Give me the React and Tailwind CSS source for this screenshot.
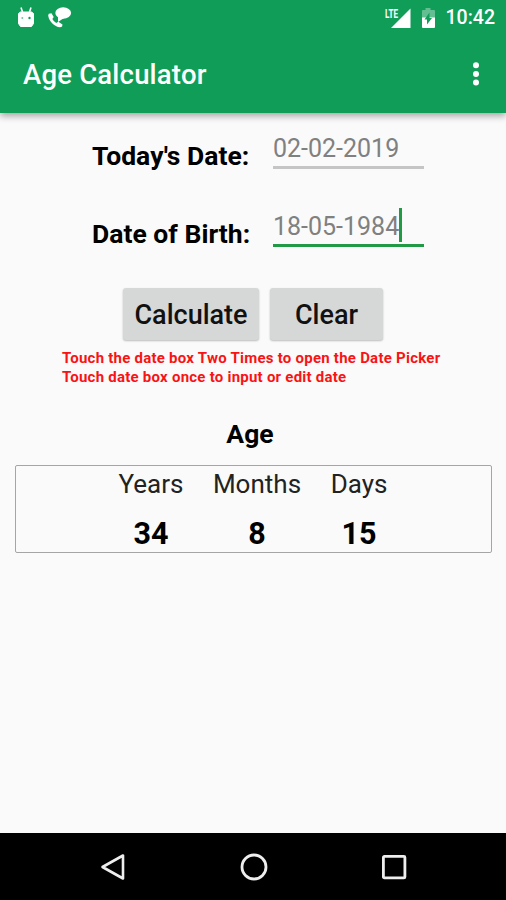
import { useState } from 'react'

const results = [
  { label: 'Years', value: '34', width: 'w-[66px]' },
  { label: 'Months', value: '8', width: 'w-[90px]' },
  { label: 'Days', value: '15', width: 'w-[58px]' },
]

function StatusBar() {
  return (
    <div className="flex h-9 items-center justify-between pl-[17px] pr-[11px]">
      <div className="flex items-center gap-[13px] pb-[2px]">
        <svg width="18" height="22" viewBox="0 0 18 22">
          <path d="M4 1.500 5.500 6M14 1.500 12.500 6" stroke="#fff" strokeWidth="1.6" />
          <path d="M3.500 6h11L16.500 7.500v10l-2 3h-11l-2-3v-10z" fill="#fff" stroke="#fff" strokeLinejoin="round" />
          <circle cx="5.300" cy="12" r="1" fill="#74c39c" />
          <circle cx="12.500" cy="12" r="1.2" fill="#109d58" />
        </svg>
        <svg width="24" height="22" viewBox="0 0 24 22" fill="#fff">
          <ellipse cx="15.2" cy="7" rx="7.9" ry="5.700" />
          <path d="M10 9v7l6-4z" />
          <path d="M.8 7.700 3.500 7.200l2.200 3.800-1.300 2c1 1.700 2.200 2.900 3.800 3.900l2.100-1.200 4.200 2.700-.4 2c-1.200 1-3.600 1.100-5.800-.2C4 17.900.4 13.500.2 9.200z" />
        </svg>
      </div>
      <div className="flex items-center">
        <svg width="27" height="22" viewBox="0 0 27 22" fill="#fff">
          <text x="1" y="10.500" fontSize="12" fontWeight="700" fontFamily="Roboto, sans-serif" textLength="13" lengthAdjust="spacingAndGlyphs">LTE</text>
          <path d="M26.500 1.500v19.500H7z" />
        </svg>
        <svg className="ml-[10px]" width="15" height="22" viewBox="0 0 15 22">
          <path d="M4.500 1h5v2H13a1 1 0 0 1 1 1v8H1V4a1 1 0 0 1 1-1h2.500z" fill="#fff" fillOpacity=".35" />
          <path d="M1 10.500h13V20a1 1 0 0 1-1 1H2a1 1 0 0 1-1-1z" fill="#fff" />
          <path d="M8.500 5.500v5.500H11l-5 6.500v-5H3.500z" fill="#109d58" />
        </svg>
        <span className="ml-[10px] text-[19.500px] font-medium leading-9">10:42</span>
      </div>
    </div>
  )
}

function DateRow({ label, value, onChange, active, className }) {
  return (
    <div className={`flex h-[54px] ${className}`}>
      <label className="w-[181px] shrink-0 pt-[9px] text-[26.500px] font-bold leading-[36px] tracking-[0.02px] text-black">{label}</label>
      <div className={`flex h-[40px] w-[151px] items-start border-b-[3px] ${active ? 'border-[#209a45]' : 'border-[#c5c5c5]'}`}>
        <input
          value={value}
          onChange={e => onChange(e.target.value)}
          className="mt-[2px] h-[35px] w-[126px] bg-transparent p-0 text-[25px] font-normal leading-[35px] text-[#808080] outline-none"
        />
        {active && <span className="mt-px h-[34px] w-[3px] bg-[#209a45]" />}
      </div>
    </div>
  )
}

export default function App() {
  const [today, setToday] = useState('02-02-2019')
  const [birth, setBirth] = useState('18-05-1984')

  return (
    <div className="flex h-[900px] w-[506px] flex-col overflow-hidden bg-[#fafafa] font-[Roboto,sans-serif]">
      <header className="z-10 h-[113px] shrink-0 bg-[#109d58] text-white shadow-[0_3px_7px_rgba(0,0,0,0.35)]">
        <StatusBar />
        <div className="flex h-[77px] items-center justify-between pl-[23px] pr-[26px]">
          <h1 className="text-[27.500px] font-medium leading-[36px] tracking-[0.2px]">Age Calculator</h1>
          <button aria-label="More options" className="pb-[2px]">
            <svg width="8" height="24" viewBox="0 0 8 24" fill="#fff">
              <circle cx="4" cy="3.300" r="3" />
              <circle cx="4" cy="12" r="3" />
              <circle cx="4" cy="20.500" r="3" />
            </svg>
          </button>
        </div>
      </header>

      <main className="flex-1 pt-[16px]">
        <DateRow className="pl-[92px]" label="Today's Date:" value={today} onChange={setToday} />
        <DateRow className="mt-[24px] pl-[92px]" label="Date of Birth:" value={birth} onChange={setBirth} active />

        <div className="mt-[27px] flex gap-[11px] pl-[123px] text-[27px] font-medium leading-[54px] text-[#111]">
          <button className="h-[52px] w-[136px] rounded-[3px] bg-[#d6d7d7] shadow-[0_1px_2px_rgba(0,0,0,0.25)]">Calculate</button>
          <button className="h-[52px] w-[113px] rounded-[3px] bg-[#d6d7d7] shadow-[0_1px_2px_rgba(0,0,0,0.25)]">Clear</button>
        </div>

        <p className="mt-[9px] whitespace-nowrap pl-[62px] text-[15px] font-bold leading-[18.500px] tracking-[0.24px] text-[#f81414]">
          Touch the date box Two Times to open the Date Picker<br />
          Touch date box once to input or edit date
        </p>

        <h2 className="mt-[30px] w-[500px] text-center text-[26.500px] font-bold leading-[36px] text-black">Age</h2>

        <div className="ml-[15px] mt-[13px] flex h-[88px] w-[477px] gap-[28px] rounded-[2px] border border-[#a5a5a5] pl-[102px]">
          {results.map(r => (
            <div key={r.label} className={`${r.width} text-center text-black`}>
              <div className="whitespace-nowrap text-[26px] font-normal leading-[36px] text-[#222]">{r.label}</div>
              <div className="mt-[14px] text-[30.500px] font-bold leading-[36px]">{r.value}</div>
            </div>
          ))}
        </div>
      </main>

      <nav className="flex h-[67px] shrink-0 items-center justify-between bg-black pl-[100px] pr-[99px]">
        <svg width="26" height="30" viewBox="0 0 26 30" fill="none" stroke="#eee" strokeWidth="2.600">
          <path d="M23 3.500v23L2.500 15z" strokeLinejoin="round" />
        </svg>
        <svg width="30" height="30" viewBox="0 0 30 30" fill="none" stroke="#eee" strokeWidth="2.800">
          <circle cx="15" cy="15" r="12" />
        </svg>
        <svg width="26" height="26" viewBox="0 0 26 26" fill="none" stroke="#eee" strokeWidth="2.800">
          <rect x="2.400" y="2.400" width="21.500" height="21.500" rx="1" />
        </svg>
      </nav>
    </div>
  )
}
